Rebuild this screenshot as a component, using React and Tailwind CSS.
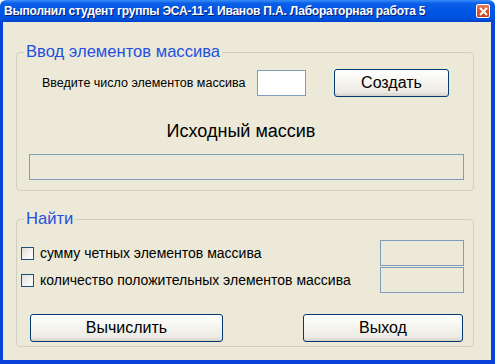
import React from 'react';

// Windows XP "Luna" form, lab work 5
const F = { fontFamily: '"Liberation Sans", Arial, sans-serif' };

function XpButton({ children, className }) {
  return (
    <button
      className={`h-[28px] rounded-[3px] border border-[#003c74] bg-[linear-gradient(to_bottom,#ffffff_0%,#f4f3ee_50%,#ecebe6_85%,#d6d0c5_100%)] text-[16px] text-black ${className}`}
      style={F}
    >
      {children}
    </button>
  );
}

function XpCheck({ label }) {
  return (
    <label className="flex items-center">
      <span className="ml-[4px] w-[13px] h-[13px] border border-[#1c5180] bg-[linear-gradient(135deg,#dcdcd7_0%,#f4f4f2_60%,#ffffff_100%)]" />
      <span className="ml-[6px] text-[14px] text-black leading-none" style={F}>{label}</span>
    </label>
  );
}

export default function App() {
  return (
    <div className="w-[495px] h-[364px] flex flex-col overflow-hidden select-none" style={F}>
      {/* title bar */}
      <div className="h-[22px] flex items-center justify-between pl-[4px] pr-[5px] rounded-t-[6px] bg-[linear-gradient(to_bottom,#3a8cf8_0%,#0a5fe8_15%,#0055e5_50%,#0052e0_85%,#0040c8_100%)]">
        <span className="text-white font-bold text-[12px] tracking-[-0.2px] [text-shadow:1px_1px_0_#0a1e74]" style={F}>
          Выполнил студент группы ЭСА-11-1 Иванов П.А. Лабораторная работа 5
        </span>
        <span className="w-[14px] h-[14px] rounded-[2px] border border-white bg-[linear-gradient(to_bottom,#e88060_0%,#e0502c_50%,#c8401c_100%)] flex items-center justify-center">
          <svg width="9" height="9" viewBox="0 0 9 9">
            <path d="M1 1 L8 8 M8 1 L1 8" stroke="#fff" strokeWidth="2" />
          </svg>
        </span>
      </div>

      {/* client */}
      <div className="flex-1 border-l-[3px] border-r-[4px] border-b-[4px] border-[#0842d8] bg-[#ece9d8] flex flex-col">
        <fieldset className="mt-[21px] ml-[13px] w-[458px] h-[148px] p-0 border border-[#d0d0bf] rounded-[4px]">
          <legend className="ml-[7px] px-[2px] text-[16.6px] leading-[18px] text-[#2350e0]">
            Ввод элементов массива
          </legend>
          <div className="flex items-center mt-[8px]">
            <span className="ml-[25px] w-[215px] text-[12.5px] text-black">Введите число элементов массива</span>
            <span className="w-[49px] h-[26px] border border-[#7f9db9] bg-white" />
            <XpButton className="ml-[28px] w-[115px]">Создать</XpButton>
          </div>
          <div className="mt-[24px] text-center text-[18px] leading-[21px] text-black pr-[8px]">Исходный массив</div>
          <div className="mt-[12px] ml-[12px] w-[435px] h-[26px] border border-[#7f9db9]" />
        </fieldset>

        <fieldset className="mt-[19px] ml-[13px] w-[458px] h-[137px] p-0 border border-[#d0d0bf] rounded-[4px]">
          <legend className="ml-[7px] px-[2px] text-[16.6px] leading-[18px] text-[#2350e0]">Найти</legend>
          <div className="mt-[12px] flex flex-col gap-[1px]">
            <div className="flex items-center h-[26px]">
              <XpCheck label="сумму четных элементов массива" />
              <span className="ml-auto mr-[9px] w-[84px] h-[26px] border border-[#7f9db9]" />
            </div>
            <div className="flex items-center h-[26px]">
              <XpCheck label="количество положительных элементов массива" />
              <span className="ml-auto mr-[9px] w-[84px] h-[26px] border border-[#7f9db9]" />
            </div>
          </div>
          <div className="mt-[21px] flex items-center">
            <XpButton className="ml-[13px] w-[193px]">Вычислить</XpButton>
            <XpButton className="ml-[80px] w-[160px]">Выход</XpButton>
          </div>
        </fieldset>
      </div>
    </div>
  );
}
